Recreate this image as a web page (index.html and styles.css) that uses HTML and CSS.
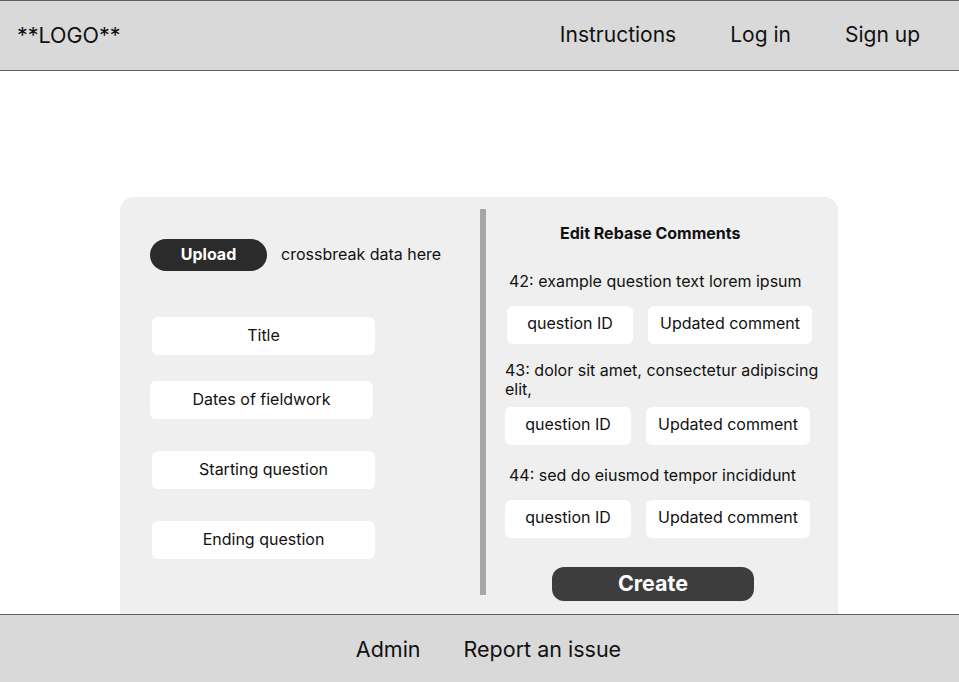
FILE: index.html
```html
<!DOCTYPE html>
<html lang="en">
<head>
<meta charset="utf-8">
<title>Crossbreak</title>
<link rel="stylesheet" href="styles.css">
</head>
<body>
<div class="page">
  <header class="topbar">
    <div class="logo">**LOGO**</div>
    <nav class="nav">
      <a class="nav-link">Instructions</a>
      <a class="nav-link">Log in</a>
      <a class="nav-link">Sign up</a>
    </nav>
  </header>
  <main class="main">
    <section class="panel">
      <div class="left">
        <div class="upload-row">
          <button class="btn-upload">Upload</button>
          <span class="upload-text">crossbreak data here</span>
        </div>
        <div class="field f-title">Title</div>
        <div class="field f-dates">Dates of fieldwork</div>
        <div class="field f-start">Starting question</div>
        <div class="field f-end">Ending question</div>
      </div>
      <div class="divider"></div>
      <div class="right">
        <h2 class="heading">Edit Rebase Comments</h2>
        <p class="q q1">42: example question text lorem ipsum</p>
        <div class="pair pair1">
          <div class="box box-id">question ID</div>
          <div class="box box-comment">Updated comment</div>
        </div>
        <p class="q q2">43: dolor sit amet, consectetur adipiscing elit,</p>
        <div class="pair pair2">
          <div class="box box-id">question ID</div>
          <div class="box box-comment">Updated comment</div>
        </div>
        <p class="q q3">44: sed do eiusmod tempor incididunt</p>
        <div class="pair pair3">
          <div class="box box-id">question ID</div>
          <div class="box box-comment">Updated comment</div>
        </div>
        <button class="btn-create">Create</button>
      </div>
    </section>
  </main>
  <footer class="footer">
    <a class="foot-link">Admin</a>
    <a class="foot-link">Report an issue</a>
  </footer>
</div>
</body>
</html>
```

FILE: styles.css
```css
* { box-sizing: border-box; }
html, body { margin: 0; padding: 0; background: #ffffff; }
body {
  font-family: Inter, "Noto Sans", "Liberation Sans", sans-serif;
  color: #111;
}
.page {
  height: 682px;
  display: flex;
  flex-direction: column;
  overflow: hidden;
}
.topbar {
  height: 71px;
  flex: 0 0 71px;
  background: #d9d9d9;
  border-top: 1px solid #5f5f5f;
  border-bottom: 1px solid #5f5f5f;
  display: flex;
  align-items: center;
  justify-content: space-between;
  padding: 0 39px 0 17px;
}
.logo { font-size: 21.5px; line-height: 24px; margin-top: -2px; }
.nav { display: flex; gap: 54px; margin-top: -2px; }
.nav-link { font-size: 21px; line-height: 24px; color: #111; }
.main {
  flex: 1 1 auto;
  overflow: hidden;
  padding: 126px 0 0 120px;
}
.panel {
  width: 718px;
  height: 460px;
  background: #efefef;
  border-radius: 14px;
  display: flex;
  align-items: flex-start;
}
.left {
  width: 360px;
  padding: 42px 0 0 30px;
  display: flex;
  flex-direction: column;
  align-items: flex-start;
}
.upload-row { display: flex; align-items: center; gap: 14px; }
.btn-upload {
  width: 117px;
  height: 32px;
  border: 0;
  border-radius: 16px;
  background: #2b2b2b;
  color: #fff;
  font-family: inherit;
  font-weight: 700;
  font-size: 16px;
  padding: 0 0 2px;
}
.upload-text { font-size: 16px; margin-top: -2px; }
.field {
  width: 223px;
  height: 38px;
  background: #fff;
  border-radius: 6px;
  display: flex;
  align-items: center;
  justify-content: center;
  font-size: 16px;
  padding-bottom: 2px;
}
.f-title { margin: 46px 0 0 2px; }
.f-dates { margin: 26px 0 0 0; }
.f-start { margin: 32px 0 0 2px; }
.f-end { margin: 32px 0 0 2px; }
.divider {
  width: 6px;
  height: 386px;
  margin-top: 12px;
  background: #a6a6a6;
  flex: 0 0 6px;
}
.right {
  padding: 0 0 0 19px;
  display: flex;
  flex-direction: column;
  align-items: flex-start;
}
.heading {
  margin: 27px 0 0 55px;
  font-size: 16px;
  line-height: 18px;
  font-weight: 700;
}
.q { margin: 0; font-size: 16px; line-height: 19px; }
.q1 { margin: 30px 0 0 4px; }
.q2 { margin: 17px 0 0 0; max-width: 320px; }
.q3 { margin: 21px 0 0 4px; }
.pair { display: flex; gap: 15px; }
.pair1 { margin: 15px 0 0 2px; }
.pair2 { margin: 8px 0 0 0; }
.pair3 { margin: 15px 0 0 0; }
.box {
  height: 38px;
  background: #fff;
  border-radius: 6px;
  display: flex;
  align-items: center;
  justify-content: center;
  font-size: 16px;
  padding-bottom: 4px;
}
.box-id { width: 126px; }
.box-comment { width: 164px; }
.btn-create {
  margin: 29px 0 0 47px;
  width: 202px;
  height: 34px;
  border: 0;
  border-radius: 12px;
  background: #3d3d3d;
  color: #fff;
  font-family: inherit;
  font-weight: 700;
  font-size: 21.5px;
  padding: 0 0 2px;
}
.footer {
  flex: 0 0 68px;
  height: 68px;
  background: #d9d9d9;
  border-top: 1px solid #5f5f5f;
  display: flex;
  align-items: center;
  justify-content: center;
  gap: 43px;
  padding-left: 18px;
}
.foot-link { font-size: 21.5px; line-height: 24px; color: #111; }
```
